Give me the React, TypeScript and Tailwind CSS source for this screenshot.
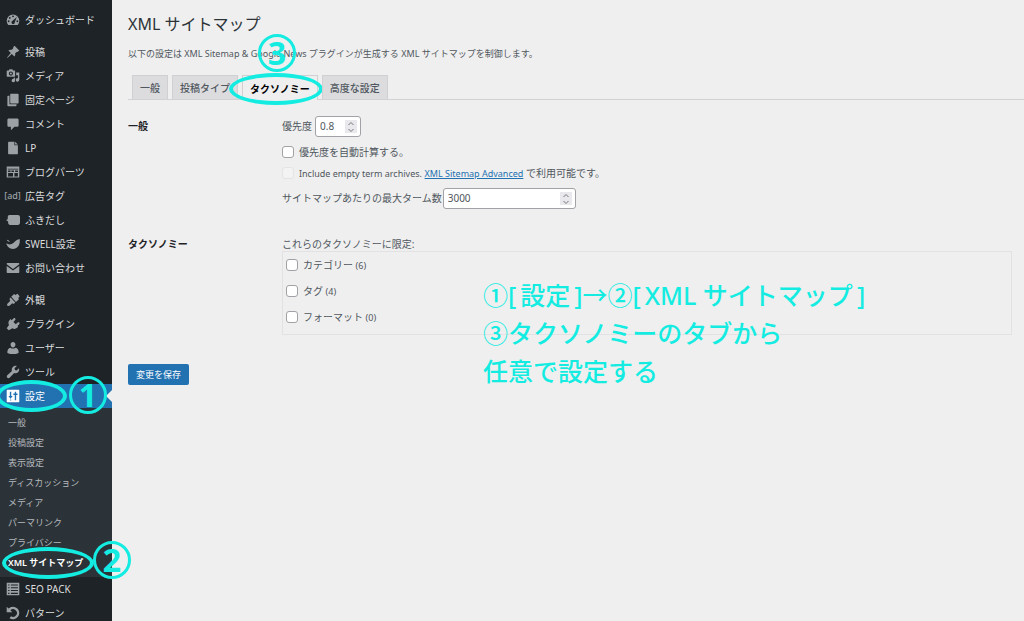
import type { ReactNode } from "react";

const PATHS: Record<string, ReactNode> = {
  dashboard: (
    <>
      <path d="M3.2 17h13.600A9 9 0 1 0 3.200 17z" />
      <g fill="#1d2327">
        <circle cx="10" cy="4.800" r="1.300" />
        <circle cx="5.400" cy="7" r="1.300" />
        <circle cx="3.800" cy="11.800" r="1.300" />
        <circle cx="16.200" cy="11.800" r="1.300" />
        <path d="M15.400 5.600l-3 7.800a2.300 2.300 0 1 1-3.400-1.800z" />
      </g>
    </>
  ),
  pin: <path d="M10.4 3l1.8-1.9 6.7 6.7-1.9 1.8c-.8-.3-1.6 0-2.2.6l-1.7 1.7c.5 1.7.1 3.5-1.1 4.7L8.3 13l-5.6 4.8-1.500.9.900-1.500L6.9 11.600 3.400 8c1.200-1.200 3-1.600 4.700-1.100l1.700-1.700c.600-.600.900-1.400.600-2.200z" />,
  media: <path fillRule="evenodd" d="M2 2h2l1-1.500h4L10 2h2c.600 0 1 .400 1 1v7c0 .600-.400 1-1 1H2c-.600 0-1-.400-1-1V3c0-.600.400-1 1-1zm5 1.500a3 3 0 1 0 0 6 3 3 0 0 0 0-6zM7 5a1.500 1.500 0 1 1 0 3 1.500 1.500 0 0 1 0-3zm7.500 0H19v10.500a2.500 2.500 0 1 1-2-2.400V9h-2.500zM11 12.500h2v4a2.500 2.500 0 1 1-2-2.400z" />,
  pages: <path d="M7 1h10c.600 0 1 .400 1 1v12c0 .600-.400 1-1 1H7c-.600 0-1-.400-1-1V2c0-.600.400-1 1-1zM3 4h2v12h10v2c0 .600-.400 1-1 1H3c-.600 0-1-.400-1-1V5c0-.600.400-1 1-1z" />,
  comment: <path d="M4 2h12c1 0 2 .900 2 2v8c0 1.100-.900 2-2 2h-4l-5 5v-5H4c-1.100 0-2-.900-2-2V4c0-1.100.900-2 2-2z" />,
  file: <path d="M4 1h8v5h5v12c0 .600-.400 1-1 1H4c-.600 0-1-.400-1-1V2c0-.600.400-1 1-1zm9 0l4 4h-4z" />,
  parts: <path fillRule="evenodd" d="M1 2h18v16H1zm1.500 4.500h15v-1h-15zM3 8v2h3.500V8zm4.800 0v2h3.500V8zM13 8v2h4V8zM3 11.500v5h7v-5zm9 0v5h5v-5z" />,
  balloon: <path d="M5 3h12c1.700 0 3 1.300 3 3v8c0 1.700-1.300 3-3 3H6c-1.700 0-3-1.300-3-3v-2L0 10l2.500-1V6c0-1.700 1-3 2.500-3z" />,
  swell: <path d="M19.500 3c1.200 7-2.500 14-9.500 14-5 0-8.500-3-9.500-8 2.500 1.800 5 2 7.500 1C12 9 13 4 19.500 3zM1 4c2 0 3.500 1 4.500 3C3.500 7 2 6 1 4z" />,
  mail: <path d="M2 3h16c.600 0 1 .400 1 1v.600l-9 6.800-9-6.800V4c0-.600.400-1 1-1zM1 7l9 6.600L19 7v9c0 .600-.400 1-1 1H2c-.600 0-1-.400-1-1z" />,
  brush: <path d="M7.500 5.500L11.500 1.500l1.800 1.300L16.500 1 19.500 4.500 17.500 7l1 1.800-4.300 4.200zM6.500 6.500l6.700 7.200-1.400 1.300c-1 .600-2 .100-2.800-.500-1.700 1.300-3.300 4-6 4-1.600 0-2-1.800-1-3 1.300-1.600 3-2.600 4.200-4.300-.800-.900-1.500-2.100-.800-3.300z" />,
  plugin: <path d="M13.1 4.400L10.600 7l3.400 3.400 2.600-2.500c.700-.700 1.800-.700 2.400 0s.600 1.700 0 2.400L16.400 13l1 1-1.500 1.500c-1.800 1.800-4.600 2-6.700.700L4 19l-3-3 3.300-4.700C3 9.200 3.200 6.400 5 4.600L6.500 3l1.500 1.600L10.700 2c.700-.700 1.700-.700 2.400 0s.700 1.700 0 2.400z" />,
  user: <path d="M10 9.300c-2.200 0-3.500-2-3.500-4.200S8 1.300 10 1.300s3.500 1.600 3.500 3.800S12.200 9.300 10 9.300zM6.300 9.500c2.300 1.800 5.100 1.800 7.400 0C16.500 10.200 18 12.500 18 15.500V17c-5 2.300-11 2.300-16 0v-1.500c0-3 1.500-5.300 4.300-6z" />,
  wrench: <path d="M17.200 10.200c-1.600 1.600-3.800 2-5.600 1.300l-6.400 6.700c-.9.900-2.500.9-3.400 0s-.9-2.500 0-3.400l6.700-6.400c-.7-1.800-.3-4 1.300-5.600C11.400 1.200 13.600.8 15.500 1.500l-3.300 3.300.6 2.400 2.400.6 3.300-3.300c.7 1.900.3 4.100-1.300 5.700z" />,
  settings: <path fillRule="evenodd" d="M2 1h16c.600 0 1 .400 1 1v16c0 .600-.400 1-1 1H2c-.600 0-1-.400-1-1V2c0-.600.400-1 1-1zm3.500 3v6h-2l3 4 3-4h-2V4zM6 15v1.500h1.500V15zM12.500 4v2.500h-2v2h2V16h2V8.500h2v-2h-2V4z" />,
  list: <path fillRule="evenodd" d="M1 1h18v18H1zm2 2.500V5h2V3.500zm4 0V5h10V3.500zm-4 4V9h2V7.500zm4 0V9h10V7.500zm-4 4V13h2v-1.500zm4 0V13h10v-1.500zm-4 4V17h2v-1.500zm4 0V17h10v-1.500z" />,
  undo: <path d="M1 1l2.600 2.600A9 9 0 1 1 5 17.500l2.200-2.700A5.500 5.500 0 1 0 6.200 6.200L9 9H1z" />,
};

function Icon({ name }: { name: string }) {
  if (name === "ad") {
    return <span className="text-[9px] font-medium">[ad]</span>;
  }
  return (
    <svg viewBox="0 0 20 20" className="h-3.5 w-3.5 shrink-0" fill="currentColor" aria-hidden="true">
      {PATHS[name]}
    </svg>
  );
}

const GROUPS = [
  [{ icon: "dashboard", label: "ダッシュボード" }],
  [
    { icon: "pin", label: "投稿" },
    { icon: "media", label: "メディア" },
    { icon: "pages", label: "固定ページ" },
    { icon: "comment", label: "コメント" },
    { icon: "file", label: "LP" },
    { icon: "parts", label: "ブログパーツ" },
    { icon: "ad", label: "広告タグ" },
    { icon: "balloon", label: "ふきだし" },
    { icon: "swell", label: "SWELL設定" },
    { icon: "mail", label: "お問い合わせ" },
  ],
  [
    { icon: "brush", label: "外観" },
    { icon: "plugin", label: "プラグイン" },
    { icon: "user", label: "ユーザー" },
    { icon: "wrench", label: "ツール" },
  ],
];

const SUBMENU = [
  "一般",
  "投稿設定",
  "表示設定",
  "ディスカッション",
  "メディア",
  "パーマリンク",
  "プライバシー",
];

const TABS = ["一般", "投稿タイプ", "タクソノミー", "高度な設定"];

const TAXONOMIES = [
  { id: "category", label: "カテゴリー", count: 6 },
  { id: "tag", label: "タグ", count: 4 },
  { id: "format", label: "フォーマット", count: 0 },
];

function MenuItem({ icon, label }: { icon: string; label: string }) {
  return (
    <a href="#" className="flex h-6 items-center text-[10px] text-[#dcdcde]">
      <span className="flex w-[25px] shrink-0 justify-center text-[#9ca1a6]">
        <Icon name={icon} />
      </span>
      {label}
    </a>
  );
}

function Ring({ className }: { className: string }) {
  return <span className={`pointer-events-none absolute rounded-[50%] border-4 border-[#14ece2] ${className}`} />;
}

function Step({ n, className }: { n: number; className: string }) {
  return (
    <span
      className={`pointer-events-none absolute z-10 flex h-[38px] w-[38px] items-center justify-center rounded-full border-3 border-[#14ece2] text-[32px] leading-none font-bold text-[#14ece2] ${className}`}
    >
      {n}
    </span>
  );
}

function Checkbox({ id, disabled }: { id: string; disabled?: boolean }) {
  return (
    <input
      id={id}
      type="checkbox"
      disabled={disabled}
      className="h-3 w-3 shrink-0 appearance-none rounded-[3px] border border-[#a0a2a6] bg-white checked:bg-[#2271b1] disabled:border-[#e4e4e5] disabled:bg-[#f3f3f3]"
    />
  );
}

function NumberField({ id, value, step, className }: { id: string; value: string; step: string; className: string }) {
  return (
    <span className={`relative flex h-[21px] ${className}`}>
      <input
        id={id}
        type="number"
        step={step}
        defaultValue={value}
        className="w-full appearance-none rounded-[3px] border border-[#a0a2a6] bg-white px-1 text-[10px] text-[#50575e] [appearance:textfield]"
      />
      <span className="pointer-events-none absolute inset-y-1 right-1 flex w-3 items-center justify-center bg-[#e9e9ed] text-[#777]">
        <svg viewBox="0 0 8 12" className="h-3 w-2" fill="none" stroke="currentColor">
          <path d="M1.500 4L4 1.500 6.500 4M1.500 8L4 10.500 6.500 8" />
        </svg>
      </span>
    </span>
  );
}

export default function App() {
  return (
    <div className="flex h-screen overflow-hidden bg-[#efefef] font-['Noto_Sans','Noto_Sans_CJK_JP',sans-serif] text-[10px] text-[#50575e]">
      {/* Admin menu */}
      <nav className="w-28 shrink-0 bg-[#1d2327] pt-2">
        {GROUPS.map((group, i) => (
          <div key={i} className={i < 2 ? "mb-2" : ""}>
            {group.map((item) => (
              <MenuItem key={item.label} icon={item.icon} label={item.label} />
            ))}
          </div>
        ))}

        <div className="relative">
          <a href="#" className="flex h-6 items-center bg-[#2271b1] text-[10px] text-white">
            <span className="flex w-[25px] shrink-0 justify-center">
              <Icon name="settings" />
            </span>
            設定
          </a>
          <span className="absolute top-1/2 right-0 -translate-y-1/2 border-y-6 border-r-6 border-y-transparent border-r-[#efefef]" />
          <Ring className="-top-1 -left-1 h-8 w-[71px]" />
          <Step n={1} className="-top-2 left-[69px]" />
        </div>

        <ul className="bg-[#2c3338] pt-[5px] pb-1 text-[9px] text-[#b4b9be]">
          {SUBMENU.map((label) => (
            <li key={label}>
              <a href="#" className="flex h-5 items-center px-2">
                {label}
              </a>
            </li>
          ))}
          <li className="relative">
            <a href="#" className="flex h-5 items-center px-2 font-semibold whitespace-nowrap text-white">
              XML サイトマップ
            </a>
            <Ring className="-top-1.5 left-0.5 h-8 w-[92px]" />
            <Step n={2} className="-top-3 left-[93px]" />
          </li>
        </ul>

        <MenuItem icon="list" label="SEO PACK" />
        <MenuItem icon="undo" label="パターン" />
      </nav>

      {/* Settings page */}
      <main className="relative min-w-0 flex-1 pt-3 pl-4">
        <h1 className="text-base leading-6 text-[#2c3338]">XML サイトマップ</h1>
        <p className="mt-2 text-[9px] leading-5">
          以下の設定は XML Sitemap &amp; Google News プラグインが生成する XML サイトマップを制御します。
        </p>

        <div className="mt-[11px] flex items-end gap-1 border-b border-[#d2d2d4] pl-1">
          {TABS.map((tab) => {
            const active = tab === "タクソノミー";
            return (
              <a
                key={tab}
                href="#"
                className={`relative flex items-center border border-b-0 border-[#d0d0d3] px-[7px] pt-0.5 ${
                  active ? "-mb-px h-[25px] bg-[#efefef] font-semibold text-black" : "h-6 bg-[#dcdcde] font-medium"
                }`}
              >
                {tab}
                {active && (
                  <>
                    <Ring className="-top-[3px] -left-[14px] h-8 w-[94px]" />
                    <Step n={3} className="-top-[42px] left-[15px]" />
                  </>
                )}
              </a>
            );
          })}
        </div>

        <form className="pr-3" onSubmit={(e) => e.preventDefault()}>
          <section className="flex pt-4">
            <h2 className="w-[154px] shrink-0 leading-5 font-semibold text-[#1d2327]">一般</h2>
            <div>
              <div className="flex items-center gap-[3px]">
                <label htmlFor="priority">優先度</label>
                <NumberField id="priority" value="0.8" step="0.1" className="w-[46px]" />
              </div>
              <div className="mt-[5px] flex h-5 items-center gap-[5px]">
                <Checkbox id="auto" />
                <label htmlFor="auto">優先度を自動計算する。</label>
              </div>
              <div className="flex h-[22px] items-center gap-[5px]">
                <Checkbox id="empty" disabled />
                <span>
                  <label htmlFor="empty" className="text-[9px]">
                    Include empty term archives.
                  </label>{" "}
                  <a href="#" className="text-[9px] text-[#2271b1] underline">
                    XML Sitemap Advanced
                  </a>{" "}
                  で利用可能です。
                </span>
              </div>
              <div className="mt-1 flex items-center gap-px">
                <label htmlFor="max">サイトマップあたりの最大ターム数</label>
                <NumberField id="max" value="3000" step="1" className="w-[133px]" />
              </div>
            </div>
          </section>

          <section className="flex pt-[27px]">
            <h2 className="w-[154px] shrink-0 leading-4 font-semibold text-[#1d2327]">タクソノミー</h2>
            <fieldset className="min-w-0 flex-1">
              <legend className="h-[15px] leading-4">これらのタクソノミーに限定:</legend>
              <ul className="h-[84px] border border-[#e2e2e4] pl-[3px]">
                {TAXONOMIES.map((t) => (
                  <li key={t.id} className="flex h-[26px] items-center gap-[5px]">
                    <Checkbox id={t.id} />
                    <label htmlFor={t.id}>
                      {t.label} <span className="text-[9px]">({t.count})</span>
                    </label>
                  </li>
                ))}
              </ul>
            </fieldset>
          </section>

          <button type="submit" className="mt-[29px] h-[21px] rounded-xs bg-[#2271b1] px-2 text-[9px] text-white">
            変更を保存
          </button>
        </form>

        <p className="absolute top-[276px] left-[371px] text-[25px] leading-[38px] font-medium whitespace-nowrap text-[#14ece2]">
          ①[<span className="px-1">設定</span>]→②[<span className="px-1">XML サイトマップ</span>]
          <br />
          ③タクソノミーのタブから
          <br />
          任意で設定する
        </p>
      </main>
    </div>
  );
}
